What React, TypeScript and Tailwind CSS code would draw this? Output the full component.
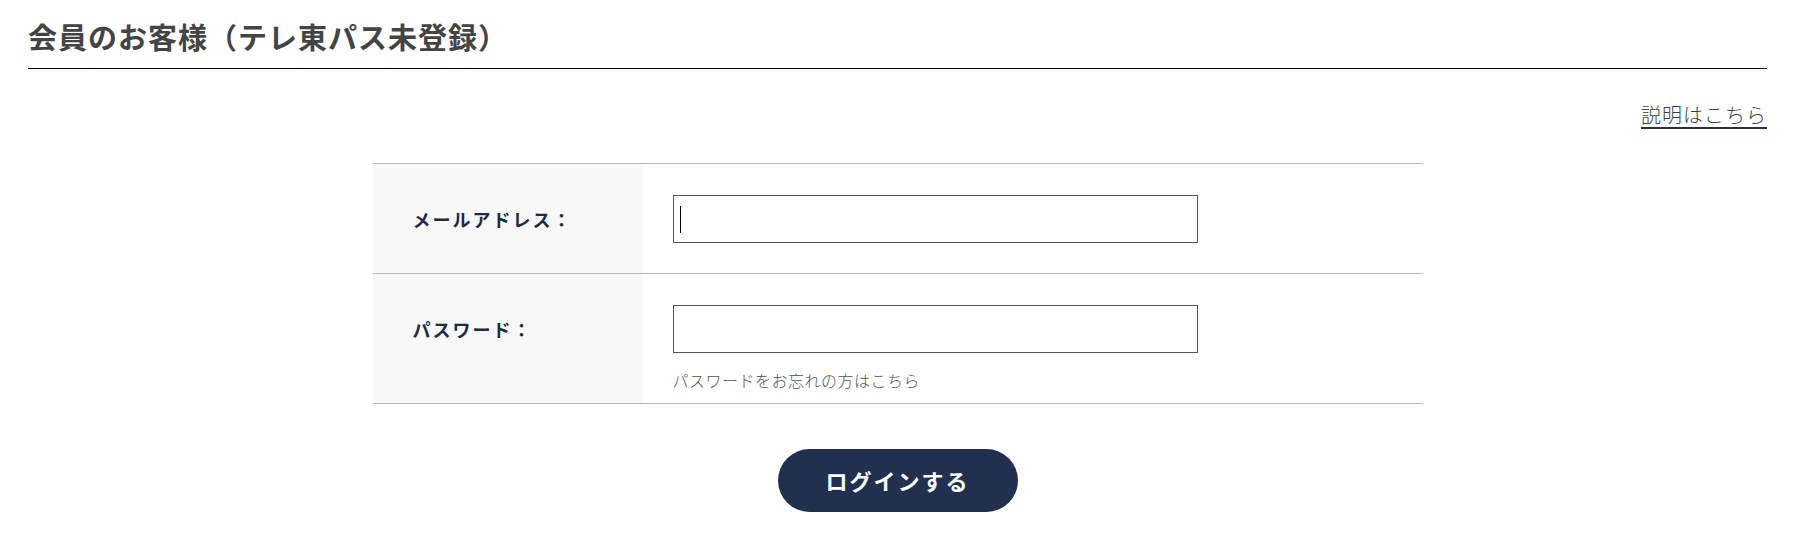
import React from "react";

const font = { fontFamily: '"Noto Sans CJK JP", "Noto Sans", sans-serif' };

export default function App() {
  return (
    <div className="min-h-[544px] bg-white" style={font}>
      <div className="ml-[28px] mr-[29px]">
        <h1 className="pt-[16px] pb-[12px] border-b border-black text-[29px] leading-[40px] font-bold tracking-[1px] text-[#444444]">
          会員のお客様（テレ東パス未登録）
        </h1>
        <div className="mt-[32px] flex justify-end">
          <a
            href="#"
            className="text-[20px] leading-[28px] tracking-[1px] font-light text-[#3f3f3f] underline decoration-[#22304f] decoration-[2px] underline-offset-[4px]"
          >
            説明はこちら
          </a>
        </div>
        <div className="mx-auto mt-[34px] w-[1050px] border-t border-[#bbbbbb]">
          <div className="flex border-b border-[#bbbbbb]">
            <div className="w-[270px] shrink-0 bg-[#f8f8f8] pl-[40px] pt-[31px]">
              <div className="h-[48px] flex items-center text-[18px] font-bold tracking-[2px] text-[#1f2a44]">
                メールアドレス：
              </div>
            </div>
            <div className="pl-[30px] pt-[31px] pb-[30px]">
              <div className="relative w-[525px] h-[48px] border border-[#555555] bg-white">
                <span className="absolute left-[6px] top-[10px] w-[1px] h-[27px] bg-black" />
              </div>
            </div>
          </div>
          <div className="flex border-b border-[#bbbbbb]">
            <div className="w-[270px] shrink-0 bg-[#f8f8f8] pl-[40px] pt-[31px]">
              <div className="h-[48px] flex items-center text-[18px] font-bold tracking-[2px] text-[#1f2a44]">
                パスワード：
              </div>
            </div>
            <div className="pl-[30px] pt-[31px] pb-[11px]">
              <div className="w-[525px] h-[48px] border border-[#555555] bg-white" />
              <p className="mt-[15px] text-[16px] leading-[24px] tracking-[0.5px] font-light text-[#555555]">
                パスワードをお忘れの方はこちら
              </p>
            </div>
          </div>
        </div>
        <div className="mt-[45px] flex justify-center">
          <button className="w-[240px] h-[63px] rounded-full bg-[#22304f] text-white text-[22px] font-bold tracking-[2px]">
            ログインする
          </button>
        </div>
      </div>
    </div>
  );
}
